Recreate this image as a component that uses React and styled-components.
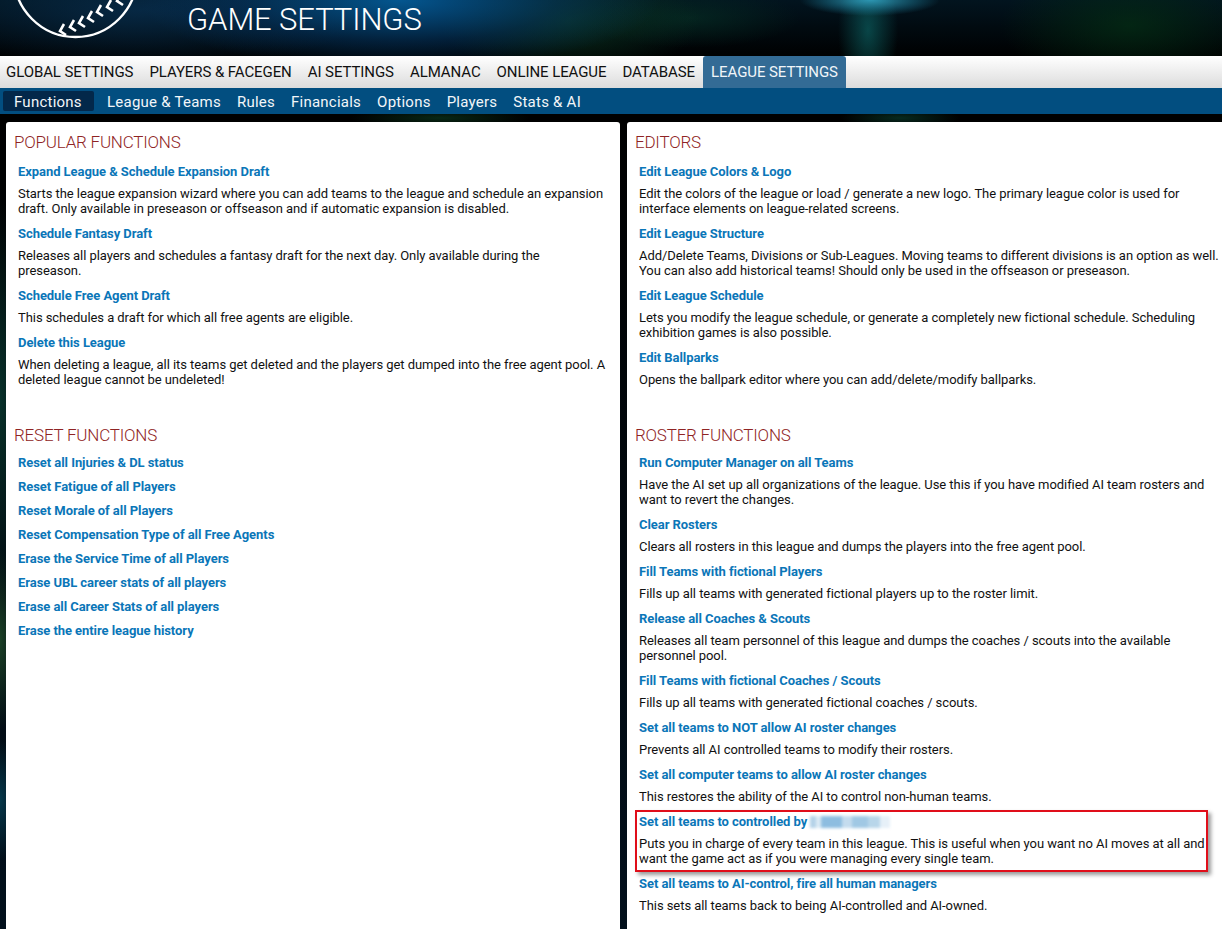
import React from "react";
import styled, { createGlobalStyle } from "styled-components";

const GlobalStyle = createGlobalStyle`
  html, body {
    margin: 0;
    height: 100%;
    overflow: hidden;
    background: #000;
    font-family: Roboto, "Liberation Sans", sans-serif;
  }
`;

const Page = styled.div`
  height: 929px;
  overflow: hidden;
  background:
    radial-gradient(ellipse 70px 16px at 870px 0, rgba(48, 160, 190, 0.9), rgba(30, 130, 160, 0.4) 65%, transparent 100%),
    radial-gradient(ellipse 30px 70px at 868px 30px, rgba(14, 110, 110, 0.6), transparent 100%),
    radial-gradient(ellipse 260px 70px at 400px 0, rgba(4, 90, 150, 0.95), rgba(4, 56, 104, 0.5) 60%, transparent 100%),
    radial-gradient(ellipse 230px 60px at 140px 10px, rgba(8, 46, 78, 0.8), transparent 100%),
    radial-gradient(ellipse 130px 60px at 570px 20px, rgba(12, 62, 36, 0.65), transparent 100%),
    radial-gradient(ellipse 110px 30px at 690px 18px, rgba(6, 50, 38, 0.6), transparent 100%),
    radial-gradient(ellipse 130px 60px at 1130px 25px, rgba(4, 46, 20, 0.75), transparent 100%),
    radial-gradient(ellipse 90px 10px at 440px 118px, rgba(10, 50, 26, 0.8), transparent 100%),
    radial-gradient(ellipse 60px 10px at 900px 118px, rgba(10, 60, 44, 0.7), transparent 100%),
    radial-gradient(ellipse 30px 200px at 0 400px, rgba(10, 60, 50, 0.8), transparent 100%),
    radial-gradient(ellipse 20px 90px at 0 640px, rgba(30, 70, 40, 0.9), transparent 100%),
    radial-gradient(ellipse 20px 60px at 0 800px, rgba(6, 60, 80, 0.9), transparent 100%),
    linear-gradient(#02141f, #000 58px, #000 120px, #02101c);
`;

const Header = styled.header`
  height: 56px;
  display: flex;
  overflow: hidden;
`;

const Logo = styled.svg`
  width: 187px;
  height: 56px;
  flex: none;
`;

const Title = styled.h1`
  margin: 0;
  height: 40px;
  font-size: 31px;
  line-height: 40px;
  letter-spacing: -0.1px;
  font-weight: 300;
  color: #fff;
`;

const MainNav = styled.nav`
  height: 32px;
  display: flex;
  background: linear-gradient(#fff, #dcdcdc);
`;

const MainTab = styled.div`
  padding: 0 8px;
  font-size: 15px;
  line-height: 32px;
  letter-spacing: -0.08px;
  text-transform: uppercase;
  color: ${(p) => (p.$active ? "#f0f5f9" : "#111")};
  background: ${(p) => (p.$active ? "#336b95" : "transparent")};
  border-radius: ${(p) => (p.$active ? "3px 3px 0 0" : "0")};

  &:first-child {
    padding-left: 6px;
  }
`;

const SubNav = styled.nav`
  height: 26px;
  display: flex;
  align-items: center;
  gap: 16px;
  padding-left: 3px;
  background: #024e80;
`;

const SubTab = styled.div`
  padding-top: 2px;
  font-size: 15px;
  line-height: 18px;
  letter-spacing: 0.24px;
  color: #f2f6f9;
  ${(p) =>
    p.$active &&
    `
    width: 91px;
    box-sizing: border-box;
    margin-right: -3px;
    padding-left: 11px;
    border-radius: 2px;
    background: #03284a;
  `}
`;

const Panels = styled.main`
  display: grid;
  grid-template-columns: 614px 614px;
  gap: 7px;
  width: 1240px;
  margin: 8px 0 0 6px;
`;

const Panel = styled.div`
  height: 830px;
  box-sizing: border-box;
  padding: 9px 8px;
  border-radius: 3px;
  background: #fff;
`;

const Section = styled.section`
  min-height: ${(p) => (p.$tall ? "293px" : "0")};
`;

const SectionTitle = styled.h2`
  margin: 0 0 ${(p) => (p.$tight ? "9px" : "11px")};
  font-size: 17px;
  line-height: 22px;
  letter-spacing: -0.22px;
  font-weight: 300;
  text-transform: uppercase;
  color: #8f2424;
`;

const Item = styled.div`
  position: relative;
  margin: 0 4px ${(p) => (p.$compact ? "9px" : "10px")};
`;

const ItemTitle = styled.div`
  margin-bottom: ${(p) => (p.$compact ? "0" : "7px")};
  font-size: 13px;
  line-height: 15px;
  letter-spacing: -0.06px;
  font-weight: 700;
  color: #0a76b8;
`;

const Desc = styled.div`
  max-width: 587.6px;
  font-size: 13px;
  line-height: 15px;
  letter-spacing: -0.06px;
  color: #111;
`;

const Blurred = styled.span`
  display: inline-block;
  width: 80px;
  height: 12px;
  vertical-align: -2px;
  filter: blur(1.4px);
  background: linear-gradient(
    90deg,
    #b4d2e8 0 8%,
    #dcebf5 8% 14%,
    #8dbde0 14% 40%,
    #c4dcee 40% 52%,
    #a0c8e4 52% 72%,
    #b8d6ea 72% 88%,
    #e6f0f8 88%
  );
`;

const Callout = styled.div`
  position: absolute;
  top: -4px;
  left: -4px;
  width: 569px;
  height: 58px;
  border: 2px solid #e00e1a;
  box-shadow: 3px 3px 4px rgba(0, 0, 0, 0.4);
  pointer-events: none;
`;

function BallLogo() {
  // seam stitches follow the lower right of the ball
  const marks = [
    [60, 31], [70, 27], [79, 23], [88, 18], [97, 12], [107, 7], [117, 1],
  ];
  return (
    <Logo viewBox="0 0 187 56" aria-hidden="true">
      <circle cx="75.5" cy="-24.5" r="61.5" fill="none" stroke="#fff" strokeWidth="2.4" />
      {marks.map(([x, y]) => (
        <path
          key={x}
          d={`M${x + 4} ${y - 7} L${x} ${y} L${x + 6} ${y + 4}`}
          fill="none"
          stroke="#fff"
          strokeWidth="2.6"
        />
      ))}
    </Logo>
  );
}

const mainTabs = ["Global Settings", "Players & FaceGen", "AI Settings", "Almanac", "Online League", "Database", "League Settings"];
const subTabs = ["Functions", "League & Teams", "Rules", "Financials", "Options", "Players", "Stats & AI"];

const popular = [
  ["Expand League & Schedule Expansion Draft", "Starts the league expansion wizard where you can add teams to the league and schedule an expansion draft. Only available in preseason or offseason and if automatic expansion is disabled."],
  ["Schedule Fantasy Draft", "Releases all players and schedules a fantasy draft for the next day. Only available during the preseason."],
  ["Schedule Free Agent Draft", "This schedules a draft for which all free agents are eligible."],
  ["Delete this League", "When deleting a league, all its teams get deleted and the players get dumped into the free agent pool. A deleted league cannot be undeleted!"],
];

const resets = [
  "Reset all Injuries & DL status",
  "Reset Fatigue of all Players",
  "Reset Morale of all Players",
  "Reset Compensation Type of all Free Agents",
  "Erase the Service Time of all Players",
  "Erase UBL career stats of all players",
  "Erase all Career Stats of all players",
  "Erase the entire league history",
];

const editors = [
  ["Edit League Colors & Logo", "Edit the colors of the league or load / generate a new logo. The primary league color is used for interface elements on league-related screens."],
  ["Edit League Structure", "Add/Delete Teams, Divisions or Sub-Leagues. Moving teams to different divisions is an option as well. You can also add historical teams! Should only be used in the offseason or preseason."],
  ["Edit League Schedule", "Lets you modify the league schedule, or generate a completely new fictional schedule. Scheduling exhibition games is also possible."],
  ["Edit Ballparks", "Opens the ballpark editor where you can add/delete/modify ballparks."],
];

const roster = [
  ["Run Computer Manager on all Teams", "Have the AI set up all organizations of the league. Use this if you have modified AI team rosters and want to revert the changes."],
  ["Clear Rosters", "Clears all rosters in this league and dumps the players into the free agent pool."],
  ["Fill Teams with fictional Players", "Fills up all teams with generated fictional players up to the roster limit."],
  ["Release all Coaches & Scouts", "Releases all team personnel of this league and dumps the coaches / scouts into the available personnel pool."],
  ["Fill Teams with fictional Coaches / Scouts", "Fills up all teams with generated fictional coaches / scouts."],
  ["Set all teams to NOT allow AI roster changes", "Prevents all AI controlled teams to modify their rosters."],
  ["Set all computer teams to allow AI roster changes", "This restores the ability of the AI to control non-human teams."],
];

const Entry = ({ title, text }) => (
  <Item>
    <ItemTitle>{title}</ItemTitle>
    <Desc>{text}</Desc>
  </Item>
);

export default function App() {
  return (
    <Page>
      <GlobalStyle />
      <Header>
        <BallLogo />
        <Title>GAME SETTINGS</Title>
      </Header>
      <MainNav>
        {mainTabs.map((t, i) => (
          <MainTab key={t} $active={i === mainTabs.length - 1}>{t}</MainTab>
        ))}
      </MainNav>
      <SubNav>
        {subTabs.map((t, i) => (
          <SubTab key={t} $active={i === 0}>{t}</SubTab>
        ))}
      </SubNav>
      <Panels>
        <Panel>
          <Section $tall>
            <SectionTitle>Popular Functions</SectionTitle>
            {popular.map(([title, text]) => <Entry key={title} title={title} text={text} />)}
          </Section>
          <Section>
            <SectionTitle $tight>Reset Functions</SectionTitle>
            {resets.map((title) => (
              <Item key={title} $compact>
                <ItemTitle $compact>{title}</ItemTitle>
              </Item>
            ))}
          </Section>
        </Panel>
        <Panel>
          <Section $tall>
            <SectionTitle>Editors</SectionTitle>
            {editors.map(([title, text]) => <Entry key={title} title={title} text={text} />)}
          </Section>
          <Section>
            <SectionTitle $tight>Roster Functions</SectionTitle>
            {roster.map(([title, text]) => <Entry key={title} title={title} text={text} />)}
            <Item>
              <ItemTitle>Set all teams to controlled by <Blurred /></ItemTitle>
              <Desc>Puts you in charge of every team in this league. This is useful when you want no AI moves at all and want the game act as if you were managing every single team.</Desc>
              <Callout />
            </Item>
            <Entry title="Set all teams to AI-control, fire all human managers" text="This sets all teams back to being AI-controlled and AI-owned." />
          </Section>
        </Panel>
      </Panels>
    </Page>
  );
}
